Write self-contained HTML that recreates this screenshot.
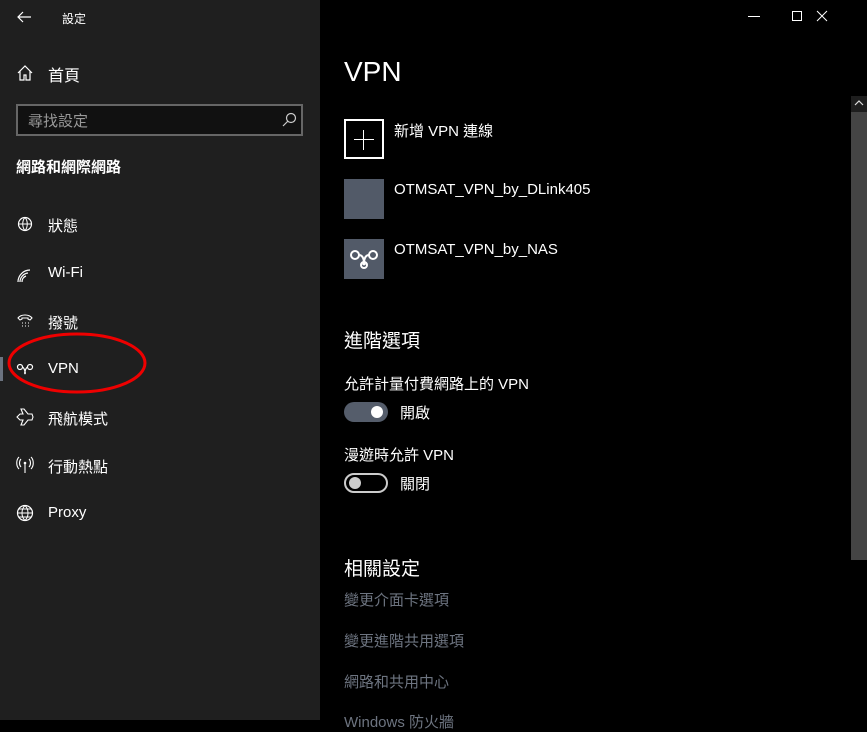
<!DOCTYPE html>
<html><head><meta charset="utf-8"><style>
*{margin:0;padding:0;box-sizing:border-box}
body{width:867px;height:720px;overflow:hidden;background:#000;font-family:"Liberation Sans","Noto Sans CJK TC",sans-serif;color:#fff;position:relative}
.side{position:absolute;left:0;top:0;width:320px;height:720px;background:#1f1f1f}
.a{position:absolute;white-space:nowrap}
.nav{position:absolute;left:48px;font-size:15px;color:#fff}
.ic{position:absolute;left:16px;width:18px;height:18px}
.link{position:absolute;left:344px;font-size:15px;color:#6d7480}
</style></head><body>
<div class="side">
  <svg class="a" style="left:16px;top:10px" width="16" height="14" viewBox="0 0 16 14"><path d="M15 7H2M7 2L2 7l5 5" stroke="#fff" stroke-width="1.2" fill="none"/></svg>
  <div class="a" style="left:62px;top:10px;font-size:12px">設定</div>
  <svg class="ic" style="top:64px" viewBox="0 0 18 18"><path d="M2 9L9 2l7 7M4 7v9h4v-5h2v5h4V7" stroke="#fff" stroke-width="1.2" fill="none"/></svg>
  <div class="nav" style="top:62px;font-size:16px">首頁</div>
  <div class="a" style="left:16px;top:104px;width:287px;height:32px;border:2px solid #666;background:#111"></div>
  <div class="a" style="left:28px;top:110px;font-size:15px;color:#999">尋找設定</div>
  <svg class="a" style="left:281px;top:112px" width="16" height="16" viewBox="0 0 16 16"><circle cx="10" cy="6" r="4.5" stroke="#ccc" stroke-width="1.2" fill="none"/><path d="M7 9L2 14" stroke="#ccc" stroke-width="1.2"/></svg>
  <div class="a" style="left:16px;top:156px;font-size:15px;font-weight:bold">網路和網際網路</div>
  <svg class="ic" style="top:216px" viewBox="0 0 18 18"><circle cx="9" cy="8" r="6.5" stroke="#fff" stroke-width="1.2" fill="none"/><path d="M2.5 8h13M9 1.5c-3 3-3 10 0 13M9 1.5c3 3 3 10 0 13" stroke="#fff" stroke-width="1" fill="none"/></svg>
  <div class="nav" style="top:215px">狀態</div>
  <svg class="ic" style="top:266px" viewBox="0 0 18 18"><path d="M2 16A12 12 0 0 1 14 4M4 16A9 9 0 0 1 12 7M6 16A6 6 0 0 1 10 10" stroke="#fff" stroke-width="1.2" fill="none"/></svg>
  <div class="nav" style="top:264px">Wi-Fi</div>
  <svg class="ic" style="top:312px" viewBox="0 0 18 18"><path d="M2 6c3-4 11-4 14 0l-2 2-2-1v-1H6v1L4 8z" stroke="#fff" stroke-width="1.1" fill="none"/><path d="M6 11h1M9 11h1M12 11h1M6 14h1M9 14h1M12 14h1" stroke="#fff"/></svg>
  <div class="nav" style="top:312px">撥號</div>
  <div class="a" style="left:0;top:357px;width:3px;height:24px;background:#6b7380"></div>
  <svg class="ic" style="top:361px" viewBox="0 0 18 18"><circle cx="4" cy="6" r="2.5" stroke="#fff" fill="none" stroke-width="1.2"/><circle cx="14" cy="6" r="2.5" stroke="#fff" fill="none" stroke-width="1.2"/><path d="M6 6c2 0 4 6 3 7M12 6c-2 0-4 6-3 7" stroke="#fff" fill="none" stroke-width="1.2"/></svg>
  <div class="nav" style="top:360px">VPN</div>
  <svg class="a" style="left:5px;top:332px" width="142" height="64" viewBox="0 0 142 64"><ellipse cx="72" cy="31" rx="68" ry="29" stroke="#e00" stroke-width="3" fill="none"/></svg>
  <svg class="ic" style="top:408px" viewBox="0 0 18 18"><path d="M1 9l3-3h3L5 1h3l4 5h4l1 3-1 3h-4l-4 5H5l2-5H4z" stroke="#fff" stroke-width="1.1" fill="none"/></svg>
  <div class="nav" style="top:408px">飛航模式</div>
  <svg class="ic" style="top:456px" viewBox="0 0 18 18"><circle cx="9" cy="7" r="1.3" fill="#fff"/><path d="M9 8v9M5 3c-2 2-2 6 0 8M13 3c2 2 2 6 0 8M3 1c-3 3-3 9 0 12M15 1c3 3 3 9 0 12" stroke="#fff" stroke-width="1.1" fill="none"/></svg>
  <div class="nav" style="top:456px">行動熱點</div>
  <svg class="ic" style="top:504px" viewBox="0 0 18 18"><circle cx="9" cy="9" r="7.5" stroke="#fff" stroke-width="1.2" fill="none"/><path d="M1.5 9h15M3 5h12M3 13h12M9 1.5c-4 4-4 11 0 15M9 1.5c4 4 4 11 0 15" stroke="#fff" stroke-width="1" fill="none"/></svg>
  <div class="nav" style="top:504px">Proxy</div>
</div>
<div class="a" style="left:748px;top:16px;width:12px;height:1px;background:#fff"></div>
<div class="a" style="left:792px;top:11px;width:10px;height:10px;border:1px solid #fff"></div>
<svg class="a" style="left:816px;top:10px" width="12" height="12"><path d="M1 1l10 10M11 1L1 11" stroke="#fff"/></svg>
<div class="a" style="left:344px;top:56px;font-size:28px">VPN</div>
<div class="a" style="left:851px;top:96px;width:16px;height:16px;background:#1e1e1e"></div>
<svg class="a" style="left:853px;top:98px" width="12" height="10"><path d="M2 7l4-4 4 4" stroke="#ddd" stroke-width="1.2" fill="none"/></svg>
<div class="a" style="left:851px;top:112px;width:16px;height:448px;background:#444"></div>
<div class="a" style="left:344px;top:119px;width:40px;height:40px;border:2px solid #fff"></div>
<div class="a" style="left:354px;top:139px;width:20px;height:1px;background:#fff"></div>
<div class="a" style="left:363px;top:130px;width:1px;height:20px;background:#fff"></div>
<div class="a" style="left:394px;top:120px;font-size:15px">新增 VPN 連線</div>
<div class="a" style="left:344px;top:179px;width:40px;height:40px;background:#525a68"></div>
<div class="a" style="left:394px;top:181px;font-size:15px">OTMSAT_VPN_by_DLink405</div>
<div class="a" style="left:344px;top:239px;width:40px;height:40px;background:#525a68"></div>
<svg class="a" style="left:348px;top:247px" width="32" height="24" viewBox="0 0 32 24"><circle cx="7" cy="8" r="4" stroke="#fff" stroke-width="2" fill="none"/><circle cx="25" cy="8" r="4" stroke="#fff" stroke-width="2" fill="none"/><path d="M11 8c4 0 6 6 4 10M21 8c-4 0-6 6-4 10" stroke="#fff" stroke-width="2" fill="none"/><circle cx="16" cy="18" r="3" stroke="#fff" stroke-width="2" fill="none"/></svg>
<div class="a" style="left:394px;top:241px;font-size:15px">OTMSAT_VPN_by_NAS</div>
<div class="a" style="left:344px;top:326px;font-size:19px">進階選項</div>
<div class="a" style="left:344px;top:373px;font-size:15px">允許計量付費網路上的 VPN</div>
<div class="a" style="left:344px;top:402px;width:44px;height:20px;border-radius:10px;background:#555d6b"></div>
<div class="a" style="left:371px;top:406px;width:12px;height:12px;border-radius:6px;background:#fff"></div>
<div class="a" style="left:400px;top:402px;font-size:15px">開啟</div>
<div class="a" style="left:344px;top:444px;font-size:15px">漫遊時允許 VPN</div>
<div class="a" style="left:344px;top:473px;width:44px;height:20px;border-radius:10px;border:2px solid #ccc"></div>
<div class="a" style="left:349px;top:477px;width:12px;height:12px;border-radius:6px;background:#ccc"></div>
<div class="a" style="left:400px;top:473px;font-size:15px">關閉</div>
<div class="a" style="left:344px;top:554px;font-size:19px">相關設定</div>
<div class="link" style="top:589px">變更介面卡選項</div>
<div class="link" style="top:630px">變更進階共用選項</div>
<div class="link" style="top:671px">網路和共用中心</div>
<div class="link" style="top:711px">Windows 防火牆</div>
</body></html>
